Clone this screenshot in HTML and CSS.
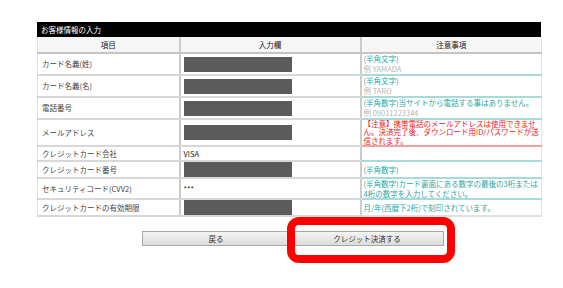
FILE: index.html
```html
<!DOCTYPE html>
<html lang="ja">
<head>
<meta charset="utf-8">
<link rel="stylesheet" href="styles.css">
</head>
<body>
<div class="page">
  <div class="title">お客様情報の入力</div>
  <table class="form">
    <colgroup><col class="c1"><col class="c2"><col class="c3"></colgroup>
    <thead>
      <tr><th>項目</th><th>入力欄</th><th>注意事項</th></tr>
    </thead>
    <tbody>
      <tr class="r1">
        <td class="label">カード名義(姓)</td>
        <td class="input"><div class="mask"></div></td>
        <td class="note"><span class="teal">(半角文字)</span><br><span class="ex">例 YAMADA</span></td>
      </tr>
      <tr class="r2">
        <td class="label">カード名義(名)</td>
        <td class="input"><div class="mask"></div></td>
        <td class="note"><span class="teal">(半角文字)</span><br><span class="ex">例 TARO</span></td>
      </tr>
      <tr class="r3">
        <td class="label">電話番号</td>
        <td class="input"><div class="mask"></div></td>
        <td class="note"><span class="teal">(半角数字)当サイトから電話する事はありません。</span><br><span class="ex">例 09011223344</span></td>
      </tr>
      <tr class="r4">
        <td class="label">メールアドレス</td>
        <td class="input"><div class="mask"></div></td>
        <td class="note red">【注意】携帯電話のメールアドレスは使用できません。決済完了後、ダウンロード用ID/パスワードが送信されます。</td>
      </tr>
      <tr class="r5">
        <td class="label">クレジットカード会社</td>
        <td class="input text">VISA</td>
        <td class="note"></td>
      </tr>
      <tr class="r6">
        <td class="label">クレジットカード番号</td>
        <td class="input"><div class="mask"></div></td>
        <td class="note"><span class="teal">(半角数字)</span></td>
      </tr>
      <tr class="r7">
        <td class="label">セキュリティコード(CVV2)</td>
        <td class="input text">***</td>
        <td class="note"><span class="teal">(半角数字)カード裏面にある数字の最後の3桁または4桁の数字を入力してください。</span></td>
      </tr>
      <tr class="r8">
        <td class="label">クレジットカードの有効期限</td>
        <td class="input"><div class="mask"></div></td>
        <td class="note last"><span class="teal">月/年(西暦下2桁)で刻印されています。</span></td>
      </tr>
    </tbody>
  </table>
  <div class="buttons">
    <button class="btn">戻る</button>
    <button class="btn">クレジット決済する</button>
    <div class="highlight"></div>
  </div>
</div>
</body>
</html>
```

FILE: styles.css
```css
html, body {
  margin: 0;
  padding: 0;
  background: #ffffff;
}
body {
  font-family: "Noto Sans CJK JP", "Liberation Sans", sans-serif;
  font-size: 7.5px;
  color: #333333;
}
.page {
  width: 504px;
  margin-left: 37px;
  padding-top: 22px;
}
.title {
  background: #000000;
  color: #ffffff;
  height: 15px;
  line-height: 15px;
  padding-left: 4px;
  font-size: 7.5px;
}
.form {
  width: 504px;
  border-collapse: collapse;
  table-layout: fixed;
  border-left: 1px solid #e4e4e4;
  border-right: 1px solid #e4e4e4;
}
.c1 { width: 142px; }
.c2 { width: 181px; }
.c3 { width: 181px; }
.form th {
  background: #f6f6f6;
  font-weight: normal;
  height: 15px;
  padding: 0;
  line-height: 15px;
  border-bottom: 2px solid #c4c4c4;
  color: #222222;
}
.form th + th,
.form td + td {
  border-left: 2px solid #cccccc;
}
.form td {
  padding: 0 0 0 3px;
  border-bottom: 2px solid #d8d8d8;
  vertical-align: middle;
  line-height: 10px;
}
.form td.label {
  padding-left: 4px;
  color: #444444;
}
.form td.input {
  padding-left: 3px;
}
.form td.text {
  color: #222222;
}
.mask {
  width: 108px;
  height: 15px;
  background: #5b5b5b;
}
.form td.note {
  border-bottom-color: #a9dada;
  padding-left: 2px;
  padding-right: 1px;
}
.form td.note.red {
  border-bottom-color: #f3a0a0;
  color: #ee2222;
  line-height: 8.4px;
}
.form td.note.last {
  border-bottom-color: #e0e0e0;
}
.teal { color: #2aa8a8; }
.ex { color: #b5b5b5; }
.r1 td, .r2 td, .r3 td { height: 20px; }
.r4 td { height: 24px; }
.r5 td, .r6 td, .r8 td { height: 13px; }
.r7 td { height: 19px; }
.r7 td.note { line-height: 9.5px; }
.buttons {
  position: relative;
  display: flex;
  padding: 14px 0 0 105px;
  height: 32px;
}
.btn {
  width: 148px;
  height: 15px;
  margin: 0;
  padding: 0;
  font-family: "Noto Sans CJK JP", "Liberation Sans", sans-serif;
  font-size: 7.5px;
  color: #333333;
  background: linear-gradient(#f4f4f4, #dcdcdc);
  border: 1px solid #a8a8a8;
  line-height: 13px;
}
.btn + .btn {
  width: 154px;
}
.highlight {
  position: absolute;
  left: 250px;
  top: 0;
  width: 152px;
  height: 30px;
  border: 8px solid #ff0000;
  border-radius: 12px;
}
```
